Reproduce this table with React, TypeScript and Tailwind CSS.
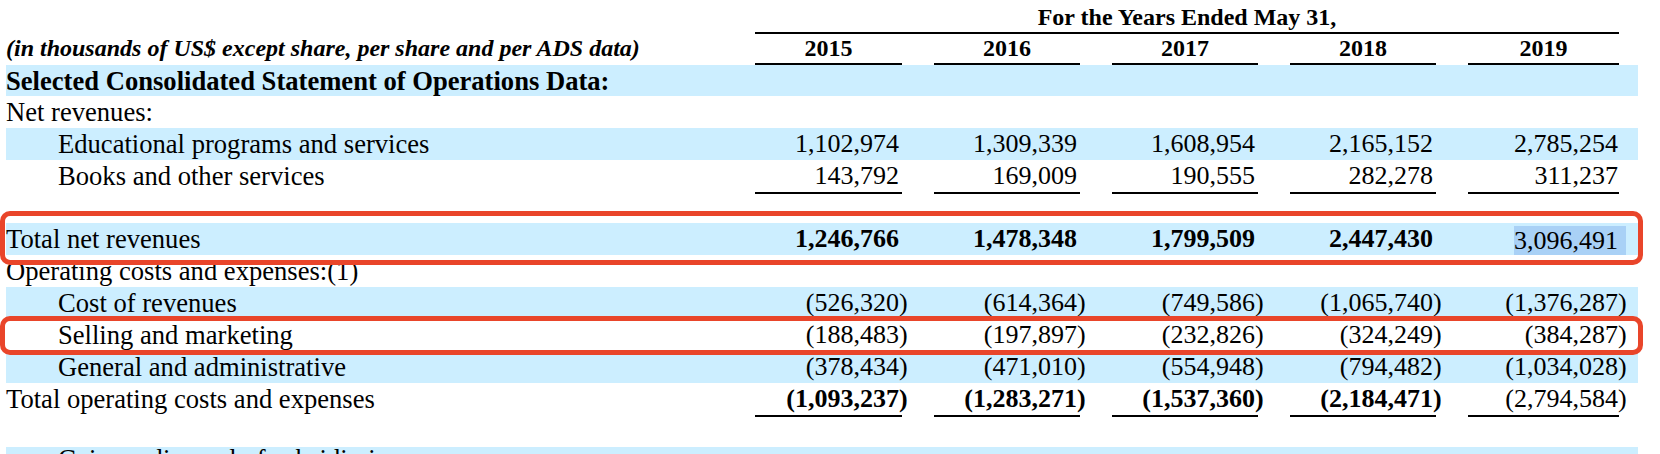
type Cell = { v: string; neg?: boolean; bold?: boolean }

type RowProps = {
  label: React.ReactNode
  cells?: Cell[]
  blue?: boolean
  indent?: boolean
  boldLabel?: boolean
  underline?: boolean
  className?: string
  overlay?: React.ReactNode
  highlightLast?: boolean
}

const widths = ["w-[147px]", "w-[146px]", "w-[146px]", "w-[146px]", "w-[151px]"]

function Row({ label, cells, blue, indent, boldLabel, underline, className, overlay, highlightLast }: RowProps) {
  return (
    <div className={`relative flex ${blue ? "bg-[#cceeff]" : ""} ${className ?? "h-[32px]"}`}>
      <div
        className={`w-[749px] shrink-0 whitespace-nowrap text-[26.6px] leading-[32px] ${indent ? "pl-[52px]" : ""} ${boldLabel ? "font-bold" : ""}`}
      >
        {label}
      </div>
      <div className="flex gap-[32px]">
        {widths.map((w, i) => {
          const c = cells?.[i]
          const last = i === 4
          return (
            <div
              key={i}
              className={`${w} text-right leading-[32px] whitespace-nowrap ${last ? "pr-[1px]" : "pr-[3px]"} ${underline ? "border-b-2 border-black" : ""} ${c?.bold ? "font-bold" : ""}`}
            >
              {c && (
                <span className={last && highlightLast ? "inline-block bg-[#a9d1f6] pr-[8px] mr-[-8px] leading-[29px] mt-[3px]" : ""}>
                  {c.neg ? "(" + c.v : c.v}
                  {c.neg && <span className="inline-block w-0 text-left">)</span>}
                </span>
              )}
            </div>
          )
        })}
      </div>
      <div className="w-[19px] shrink-0" />
      {overlay}
    </div>
  )
}

const pos = (vals: string[], bold = false): Cell[] => vals.map((v, i) => ({ v, bold: bold && i < 4 }))
const neg = (vals: string[], bold = false): Cell[] => vals.map((v, i) => ({ v, neg: true, bold: bold && i < 4 }))

export default function App() {
  return (
    <div
      className="w-[1660px] h-[454px] overflow-hidden bg-white text-black text-[26px]"
      style={{ fontFamily: '"Liberation Serif", "Times New Roman", serif' }}
    >
      <div className="ml-[6px] w-[1632px]">
        {/* header */}
        <div className="flex h-[34px]">
          <div className="w-[749px] shrink-0" />
          <div className="w-[864px] border-b-2 border-black text-center text-[24px] font-bold leading-[30px] pt-[2px]">
            For the Years Ended May 31,
          </div>
        </div>
        <div className="flex h-[31px]">
          <div className="w-[749px] shrink-0 whitespace-nowrap text-[24px] font-bold italic leading-[26px] pt-[1px]">
            (in thousands of US$ except share, per share and per ADS data)
          </div>
          <div className="flex gap-[32px]">
            {["2015", "2016", "2017", "2018", "2019"].map((y, i) => (
              <div key={y} className={`${widths[i]} border-b-2 border-black text-center text-[24px] font-bold leading-[29px]`}>
                {y}
              </div>
            ))}
          </div>
        </div>

        <Row label="Selected Consolidated Statement of Operations Data:" boldLabel blue className="h-[31px]" />
        <Row label="Net revenues:" />
        <Row
          label="Educational programs and services"
          indent
          blue
          cells={pos(["1,102,974", "1,309,339", "1,608,954", "2,165,152", "2,785,254"])}
        />
        <Row
          label="Books and other services"
          indent
          underline
          className="h-[34px]"
          cells={pos(["143,792", "169,009", "190,555", "282,278", "311,237"])}
        />
        <div className="h-[29px]" />
        <Row
          label="Total net revenues"
          blue
          highlightLast
          cells={pos(["1,246,766", "1,478,348", "1,799,509", "2,447,430", "3,096,491"], true)}
          overlay={
            <div className="pointer-events-none absolute left-[-6px] right-[-5px] top-[-12px] bottom-[-10px] z-10 rounded-[10px] border-[5px] border-[#e9452a]" />
          }
        />
        <Row label="Operating costs and expenses:(1)" />
        <Row
          label="Cost of revenues"
          indent
          blue
          cells={neg(["526,320", "614,364", "749,586", "1,065,740", "1,376,287"])}
        />
        <Row
          label="Selling and marketing"
          indent
          cells={neg(["188,483", "197,897", "232,826", "324,249", "384,287"])}
          overlay={
            <div className="pointer-events-none absolute left-[-6px] right-[-5px] top-[-3px] bottom-[-4px] z-10 rounded-[10px] border-[5px] border-[#e9452a]" />
          }
        />
        <Row
          label="General and administrative"
          indent
          blue
          cells={neg(["378,434", "471,010", "554,948", "794,482", "1,034,028"])}
        />
        <Row
          label="Total operating costs and expenses"
          underline
          className="h-[34px]"
          cells={neg(["1,093,237", "1,283,271", "1,537,360", "2,184,471", "2,794,584"], true)}
        />
        <div className="h-[30px]" />
        <div className="flex h-[32px] bg-[#cceeff]">
          <div className="w-[749px] shrink-0 whitespace-nowrap pl-[52px] text-[26.6px] leading-[24px]">
            Gain on disposal of subsidiaries
          </div>
        </div>
      </div>
    </div>
  )
}
